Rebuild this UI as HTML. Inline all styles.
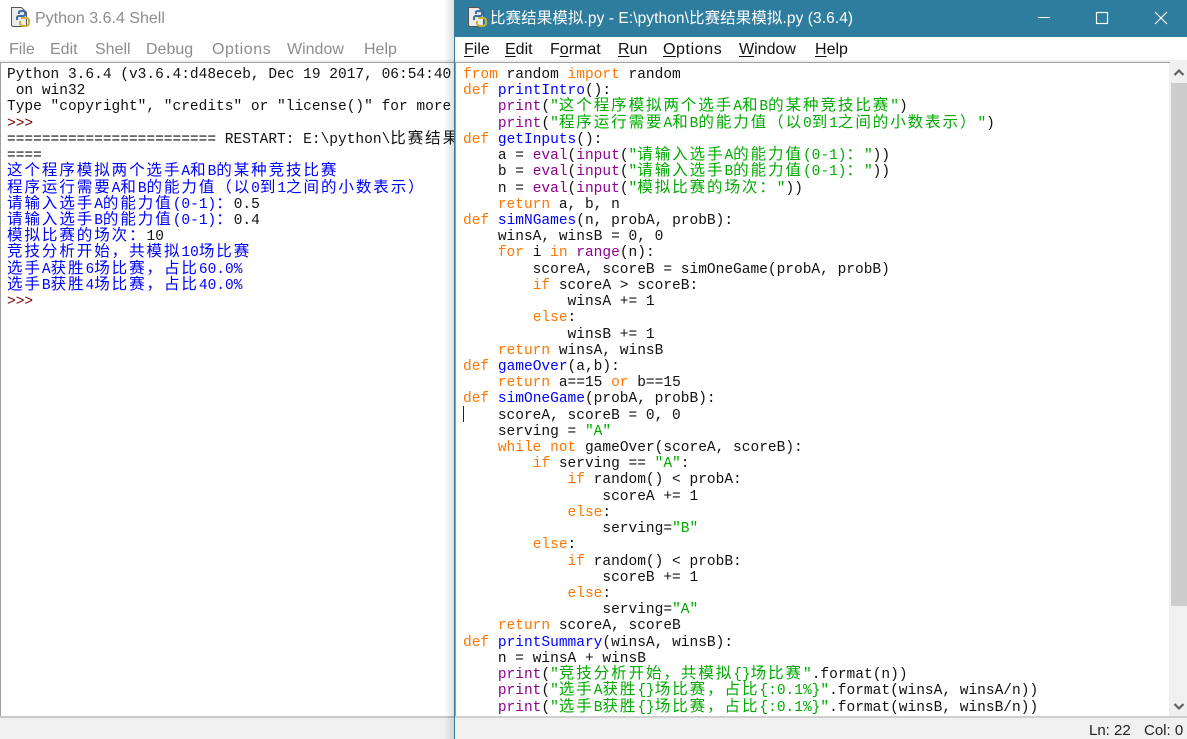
<!DOCTYPE html>
<html><head><meta charset="utf-8">
<style>
html,body{margin:0;padding:0;width:1187px;height:739px;overflow:hidden;background:#f0f0f0}
body{position:relative;font-family:"Liberation Sans","Noto Sans CJK SC",sans-serif}
.a{position:absolute}
.t{position:absolute;white-space:pre;font-size:16px;line-height:20px}
.code{position:absolute;overflow:hidden;background:#fff;font-family:"Liberation Mono","Noto Sans CJK SC",monospace;font-size:14.53px;color:#111;filter:blur(.3px)}
.l{height:16.23px;line-height:16.23px;white-space:pre}
i{font-style:normal;font-size:15.5px;line-height:0;letter-spacing:1.94px;font-family:"Noto Sans CJK SC",sans-serif;font-weight:400}
.k{color:#ff7700}.f{color:#0000ff}.b{color:#900090}.s{color:#00aa00}.o{color:#0000ff}.p{color:#770000}.n{color:#111}
u{text-decoration:underline;text-underline-offset:2px}
</style></head><body>
<!-- left window -->
<div class="a" style="left:0;top:0;width:454px;height:37px;background:#fff"></div>
<div class="a" style="left:0;top:37px;width:454px;height:23px;background:#fff"></div>
<div class="a" style="left:0;top:60px;width:454px;height:2px;background:#f0f0f0"></div>
<svg class="a" style="left:9px;top:6px" width="22" height="22" viewBox="0 0 22 22"><path d="M2.5 1.5h10l5 5v14H4.5q-2 0-2-2z" fill="#ececee" stroke="#555"/><path d="M8 14v-2q0-2 2-2h4q2 0 2-2V6q0-1-3-1t-3 1v2" fill="none" stroke="#3a6ea5" stroke-width="2"/><path d="M12 12h5q3 0 3 3v2q0 3-4 3t-5-2v-3" fill="none" stroke="#c9b13c" stroke-width="2"/></svg>
<div class="t" style="left:35px;top:8px;color:#8d8d8d;top:9px">Python 3.6.4 Shell</div>
<div class="t" style="left:9px;top:40px;color:#8d8d8d">File</div>
<div class="t" style="left:50px;top:40px;color:#8d8d8d">Edit</div>
<div class="t" style="left:95px;top:40px;color:#8d8d8d">Shell</div>
<div class="t" style="left:146px;top:40px;color:#8d8d8d">Debug</div>
<div class="t" style="left:212px;top:40px;color:#8d8d8d;letter-spacing:.6px">Options</div>
<div class="t" style="left:287px;top:40px;color:#8d8d8d">Window</div>
<div class="t" style="left:364px;top:40px;color:#8d8d8d">Help</div>
<div class="a" style="left:0;top:62px;width:454px;height:1px;background:#a0a0a0"></div>
<div class="a" style="left:0;top:62px;width:1px;height:654px;background:#a0a0a0"></div>
<div class="code" style="left:1px;top:63px;width:453px;height:653px;padding:0">
<div style="position:absolute;left:6px;top:4px;width:600px">
<div class="l">Python 3.6.4 (v3.6.4:d48eceb, Dec 19 2017, 06:54:40</div>
<div class="l"> on win32</div>
<div class="l">Type "copyright", "credits" or "license()" for more</div>
<div class="l p">&gt;&gt;&gt;</div>
<div class="l">======================== RESTART: E:\python\<i>比赛结果</i></div>
<div class="l">====</div>
<div class="l o"><i>这个程序模拟两个选手</i>A<i>和</i>B<i>的某种竞技比赛</i></div>
<div class="l o"><i>程序运行需要</i>A<i>和</i>B<i>的能力值（以</i>0<i>到</i>1<i>之间的小数表示）</i></div>
<div class="l o"><i>请输入选手</i>A<i>的能力值</i>(0-1)<i>：</i><span class="n">0.5</span></div>
<div class="l o"><i>请输入选手</i>B<i>的能力值</i>(0-1)<i>：</i><span class="n">0.4</span></div>
<div class="l o"><i>模拟比赛的场次：</i><span class="n">10</span></div>
<div class="l o"><i>竞技分析开始，共模拟</i>10<i>场比赛</i></div>
<div class="l o"><i>选手</i>A<i>获胜</i>6<i>场比赛，占比</i>60.0%</div>
<div class="l o"><i>选手</i>B<i>获胜</i>4<i>场比赛，占比</i>40.0%</div>
<div class="l p">&gt;&gt;&gt;</div>
</div></div>
<div class="a" style="left:0;top:716px;width:454px;height:2px;background:#c8c8c8"></div>
<div class="a" style="left:444px;top:0;width:10px;height:739px;background:linear-gradient(90deg,rgba(0,0,0,0),rgba(0,0,0,.12))"></div>
<!-- right window -->
<div class="a" style="left:454px;top:0;width:733px;height:37px;background:#2e7c9e"></div>
<div class="a" style="left:454px;top:0;width:1px;height:739px;background:#2e7c9e"></div>
<div class="a" style="left:455px;top:37px;width:732px;height:23px;background:#fff"></div>
<div class="a" style="left:455px;top:60px;width:732px;height:2px;background:#f0f0f0"></div>
<svg class="a" style="left:466px;top:6px" width="22" height="22" viewBox="0 0 22 22"><path d="M2.5 1.5h10l5 5v14H4.5q-2 0-2-2z" fill="#ececee" stroke="#555"/><path d="M8 14v-2q0-2 2-2h4q2 0 2-2V6q0-1-3-1t-3 1v2" fill="none" stroke="#3a6ea5" stroke-width="2"/><path d="M12 12h5q3 0 3 3v2q0 3-4 3t-5-2v-3" fill="none" stroke="#c9b13c" stroke-width="2"/></svg>
<div class="t" style="left:490px;top:9px;color:#fff;font-size:15.5px;letter-spacing:.08px">比赛结果模拟.py - E:\python\比赛结果模拟.py (3.6.4)</div>
<div class="t" style="left:464px;top:40px;color:#111"><u>F</u>ile</div>
<div class="t" style="left:505px;top:40px;color:#111"><u>E</u>dit</div>
<div class="t" style="left:550px;top:40px;color:#111">F<u>o</u>rmat</div>
<div class="t" style="left:618px;top:40px;color:#111"><u>R</u>un</div>
<div class="t" style="left:663px;top:40px;color:#111;letter-spacing:.6px"><u>O</u>ptions</div>
<div class="t" style="left:739px;top:40px;color:#111"><u>W</u>indow</div>
<div class="t" style="left:815px;top:40px;color:#111"><u>H</u>elp</div>
<svg class="a" style="left:1030px;top:5px" width="157" height="26" viewBox="0 0 157 26" fill="none" stroke="#fff"><path d="M8 12.5h12"/><rect x="66.5" y="7.5" width="11" height="11" stroke-width="1.2"/><path d="M125 7l12 12M137 7l-12 12" stroke-width="1.2"/></svg>
<div class="a" style="left:455px;top:62px;width:715px;height:1px;background:#a0a0a0"></div>
<div class="a" style="left:455px;top:62px;width:1px;height:654px;background:#a0a0a0"></div>
<div class="code" style="left:456px;top:63px;width:713px;height:653px">
<div style="position:absolute;left:7px;top:4px;width:720px">
<div class="l"><span class="k">from</span> random <span class="k">import</span> random</div>
<div class="l"><span class="k">def</span> <span class="f">printIntro</span>():</div>
<div class="l">    <span class="b">print</span>(<span class="s">"<i>这个程序模拟两个选手</i>A<i>和</i>B<i>的某种竞技比赛</i>"</span>)</div>
<div class="l">    <span class="b">print</span>(<span class="s">"<i>程序运行需要</i>A<i>和</i>B<i>的能力值（以</i>0<i>到</i>1<i>之间的小数表示）</i>"</span>)</div>
<div class="l"><span class="k">def</span> <span class="f">getInputs</span>():</div>
<div class="l">    a = <span class="b">eval</span>(<span class="b">input</span>(<span class="s">"<i>请输入选手</i>A<i>的能力值</i>(0-1)<i>：</i>"</span>))</div>
<div class="l">    b = <span class="b">eval</span>(<span class="b">input</span>(<span class="s">"<i>请输入选手</i>B<i>的能力值</i>(0-1)<i>：</i>"</span>))</div>
<div class="l">    n = <span class="b">eval</span>(<span class="b">input</span>(<span class="s">"<i>模拟比赛的场次：</i>"</span>))</div>
<div class="l">    <span class="k">return</span> a, b, n</div>
<div class="l"><span class="k">def</span> <span class="f">simNGames</span>(n, probA, probB):</div>
<div class="l">    winsA, winsB = 0, 0</div>
<div class="l">    <span class="k">for</span> i <span class="k">in</span> <span class="b">range</span>(n):</div>
<div class="l">        scoreA, scoreB = simOneGame(probA, probB)</div>
<div class="l">        <span class="k">if</span> scoreA &gt; scoreB:</div>
<div class="l">            winsA += 1</div>
<div class="l">        <span class="k">else</span>:</div>
<div class="l">            winsB += 1</div>
<div class="l">    <span class="k">return</span> winsA, winsB</div>
<div class="l"><span class="k">def</span> <span class="f">gameOver</span>(a,b):</div>
<div class="l">    <span class="k">return</span> a==15 <span class="k">or</span> b==15</div>
<div class="l"><span class="k">def</span> <span class="f">simOneGame</span>(probA, probB):</div>
<div class="l">    scoreA, scoreB = 0, 0</div>
<div class="l">    serving = <span class="s">"A"</span></div>
<div class="l">    <span class="k">while</span> <span class="k">not</span> gameOver(scoreA, scoreB):</div>
<div class="l">        <span class="k">if</span> serving == <span class="s">"A"</span>:</div>
<div class="l">            <span class="k">if</span> random() &lt; probA:</div>
<div class="l">                scoreA += 1</div>
<div class="l">            <span class="k">else</span>:</div>
<div class="l">                serving=<span class="s">"B"</span></div>
<div class="l">        <span class="k">else</span>:</div>
<div class="l">            <span class="k">if</span> random() &lt; probB:</div>
<div class="l">                scoreB += 1</div>
<div class="l">            <span class="k">else</span>:</div>
<div class="l">                serving=<span class="s">"A"</span></div>
<div class="l">    <span class="k">return</span> scoreA, scoreB</div>
<div class="l"><span class="k">def</span> <span class="f">printSummary</span>(winsA, winsB):</div>
<div class="l">    n = winsA + winsB</div>
<div class="l">    <span class="b">print</span>(<span class="s">"<i>竞技分析开始，共模拟</i>{}<i>场比赛</i>"</span>.format(n))</div>
<div class="l">    <span class="b">print</span>(<span class="s">"<i>选手</i>A<i>获胜</i>{}<i>场比赛，占比</i>{:0.1%}"</span>.format(winsA, winsA/n))</div>
<div class="l">    <span class="b">print</span>(<span class="s">"<i>选手</i>B<i>获胜</i>{}<i>场比赛，占比</i>{:0.1%}"</span>.format(winsB, winsB/n))</div>
</div></div>
<div class="a" style="left:463px;top:406px;width:1px;height:16px;background:#222"></div>
<div class="a" style="left:1170px;top:62px;width:17px;height:654px;background:#f0f0f0"></div>
<div class="a" style="left:1171px;top:83px;width:16px;height:523px;background:#cdcdcd"></div>
<svg class="a" style="left:1171px;top:62px" width="16" height="654" viewBox="0 0 16 654" fill="none" stroke="#606060" stroke-width="2.2"><path d="M3.5 13L8 8.5l4.5 4.5M3.5 642L8 646.5l4.5-4.5"/></svg>
<div class="a" style="left:455px;top:716px;width:732px;height:2px;background:#d0d0d0"></div>
<div class="t" style="left:1089px;top:721px;color:#222;font-size:15px">Ln: 22</div>
<div class="t" style="left:1144px;top:721px;color:#222;font-size:15px">Col: 0</div>
</body></html>
